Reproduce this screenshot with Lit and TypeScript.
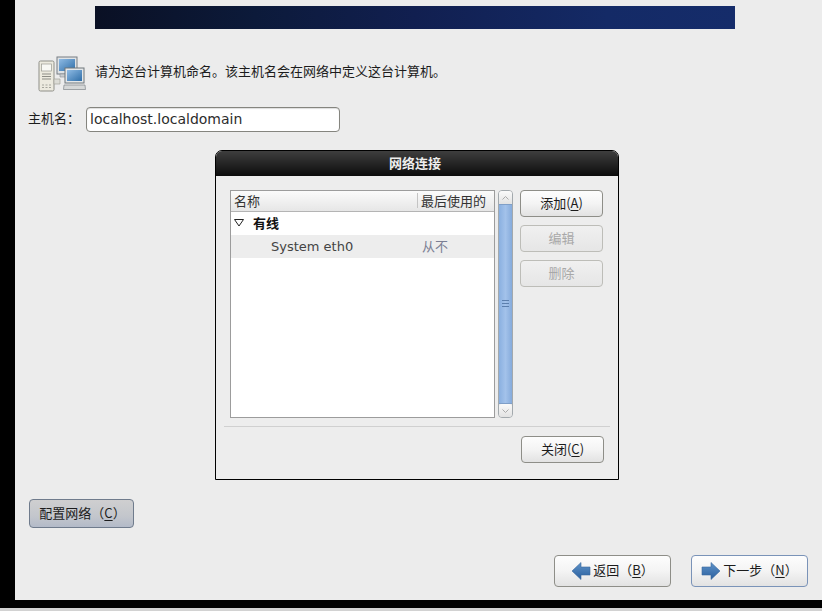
import { LitElement, html, css, svg } from "lit";
import { customElement } from "lit/decorators.js";

const arrow = (dir: "l" | "r") => html`<svg class="arrow" width="20" height="20" viewBox="0 0 20 20">
  <defs><linearGradient id="ag${dir}" x1="0" y1="0" x2="0" y2="1"><stop offset="0" stop-color="#5f93c8"/><stop offset="1" stop-color="#2a5f9e"/></linearGradient></defs>
  ${dir === "l"
    ? svg`<path d="M1 10 L10 1.5 V6 H19 V14 H10 V18.5 Z" fill="url(#agl)" stroke="#3a6a9f" stroke-width=".6"/>`
    : svg`<path d="M19 10 L10 1.5 V6 H1 V14 H10 V18.5 Z" fill="url(#agr)" stroke="#3a6a9f" stroke-width=".6"/>`}
</svg>`;

const computers = html`<svg width="48" height="36" viewBox="0 0 48 36">
  <defs><linearGradient id="scr" x1="0" y1="0" x2="1" y2="1"><stop offset="0" stop-color="#8fbbe4"/><stop offset="1" stop-color="#2f6ea8"/></linearGradient></defs>
  <rect x="1" y="5" width="15" height="30" rx="1.5" fill="#eceadf" stroke="#8f8f88"/>
  <rect x="3.5" y="8" width="10" height="7" fill="#f8f8f4" stroke="#9a9a92" stroke-width=".7"/>
  <path d="M4 18h9M4 20.5h9M4 23h9" stroke="#8d8d86"/>
  <path d="M4 29h2M7.500 29h2M11 29h2M4 31.500h2M7.500 31.500h2M11 31.500h2" stroke="#a5a59c"/>
  <path d="M16 23h6v5h-6z" fill="#dcdcd6" stroke="#a3a39c" stroke-width=".7"/>
  <rect x="19" y="1" width="20" height="17" fill="#dfe3e6" stroke="#777d82"/>
  <rect x="21" y="3" width="16" height="12" fill="url(#scr)"/>
  <path d="M22 18h14v3H22z" fill="#c9cdd0" stroke="#8a8f93" stroke-width=".6"/>
  <rect x="27" y="12" width="19" height="15" fill="#e4e7e9" stroke="#6f767b"/>
  <rect x="29" y="14" width="15" height="11" fill="url(#scr)"/>
  <path d="M26 29h21l.5 4.500h-22z" fill="#d6d8d8" stroke="#80858a" stroke-width=".7"/>
</svg>`;

@customElement("app-root")
export class AppRoot extends LitElement {
  static styles = css`
    :host { display: block; width: 822px; height: 611px; background: #000; overflow: hidden;
      font-family: "Noto Sans CJK SC", "DejaVu Sans", sans-serif; font-size: 13px; color: #1c1c1c; }
    * { box-sizing: border-box; }
    .latin { font-family: "DejaVu Sans", "Noto Sans CJK SC", sans-serif; }
    .screen { margin-left: 15px; height: 600px; background: #ececec; display: flex; flex-direction: column; }
    .banner { margin: 6px 0 0 80px; width: 640px; height: 23px; flex: none;
      background: linear-gradient(90deg, #0a1024 0%, #0c1a3a 25%, #111f50 50%, #142a66 80%, #152c6a 100%); }
    .intro { display: flex; align-items: center; gap: 9px; margin: 27px 0 0 23px; height: 36px; }
    .intro span { padding-bottom: 7px; }
    .host { display: flex; align-items: center; margin: 14px 0 0 13px; height: 26px; }
    .host label { width: 58px; padding-bottom: 3px; }
    .input { width: 254px; height: 25px; background: #fff; border: 1px solid #85857f; border-radius: 4px;
      padding-left: 3px; line-height: 22px; font-size: 14px; color: #2c2c2c; box-shadow: inset 0 1px 1px #ddd; }
    .dialog { margin: 18px 0 0 200px; width: 404px; height: 330px; flex: none; border: 1px solid #000; background: #ededed;
      border-radius: 7px 7px 0 0; overflow: hidden; display: flex; flex-direction: column; }
    .title { height: 25px; flex: none; background: linear-gradient(#3e3e3e, #0c0c0c); color: #eee; font-weight: 700;
      display: flex; align-items: center; justify-content: center; font-size: 13px; padding: 0 4px 2px 0; }
    .body { padding: 14px 15px 0 14px; display: flex; height: 228px; box-sizing: content-box; }
    .tree { width: 265px; height: 228px; background: #fff; border: 1px solid #9c9c9c; flex: none; }
    .thead { display: flex; height: 21px; background: linear-gradient(#fbfbfb, #e6e6e6); border-bottom: 1px solid #b4b4b4;
      align-items: center; line-height: 20px; color: #333; padding-bottom: 1px; }
    .thead .c1 { width: 186px; padding-left: 3px; }
    .thead .c2 { border-left: 1px solid #c4c4c4; padding-left: 3px; height: 15px; line-height: 15px; white-space: nowrap; }
    .group { display: flex; align-items: center; height: 23px; font-weight: 700; color: #111; padding: 0 0 3px 3px; gap: 9px; }
    .group svg { margin-top: 2px; }
    .row { display: flex; align-items: center; height: 23px; background: #ededed; color: #444; }
    .row .name { width: 191px; padding-left: 40px; font-size: 13px; }
    .row .used { color: #7b7f94; padding-bottom: 2px; }
    .scroll { width: 15px; height: 228px; margin-left: 3px; flex: none; border: 1px solid #a3a9ad; border-radius: 4px;
      background: #e6e6e6; display: flex; flex-direction: column; }
    .step { height: 13px; flex: none; background: linear-gradient(#fafafa, #e2e2e2); display: flex; align-items: center; justify-content: center; border-radius: 3px; }
    .thumb { flex: 1; background: linear-gradient(90deg, #8ab0e0, #a3c2ea 50%, #86abdb); border: solid #7f9fc8; border-width: 1px 0;
      display: flex; align-items: center; justify-content: center; }
    .grip { width: 7px; height: 8px; background: repeating-linear-gradient(#5c7fad 0 1px, transparent 1px 3px); }
    .side { display: flex; flex-direction: column; gap: 8px; margin-left: 7px; }
    button { font: inherit; color: #1c1c1c; padding: 0 0 2px; background: linear-gradient(#fdfdfd 0%, #f4f4f4 50%, #e2e2e2 100%);
      border: 1px solid #8e8e88; border-radius: 4px; display: flex; align-items: center; justify-content: center; }
    .side button { width: 83px; height: 27px; }
    .side button[disabled] { color: #a8a8a8; border-color: #bdbdb8; background: linear-gradient(#f0f0f0, #e6e6e6); }
    .sep { height: 1px; background: #d0d0d0; margin: 8px 8px 0 8px; flex: none; }
    .close { display: flex; justify-content: flex-end; padding: 9px 14px 0 0; }
    .close button { width: 83px; height: 27px; }
    .config { margin: 19px 0 0 14px; width: 105px; height: 29px; flex: none; border: 1px solid #6f7b8c; padding-left: 2px;
      background: linear-gradient(#cfcfd0, #c3c6cc 60%, #b3bac8); }
    .nav { display: flex; justify-content: flex-end; gap: 20px; margin: 27px 14px 0 0; }
    .nav button { width: 117px; height: 32px; gap: 2px; padding: 0; }
    .nav button span { padding-bottom: 3px; }
    .nav button.focus { border-color: #7a93b8; }
    .arrow { flex: none; }
    .foot { height: 8px; background: #000; }
    .line { height: 3px; background: #d2d2d2; }
    u { text-underline-offset: 2px; }
  `;

  render() {
    return html`
      <div class="screen">
        <div class="banner"></div>
        <div class="intro">${computers}<span>请为这台计算机命名。该主机名会在网络中定义这台计算机。</span></div>
        <div class="host"><label>主机名：</label><div class="input latin">localhost.localdomain</div></div>
        <div class="dialog">
          <div class="title">网络连接</div>
          <div class="body">
            <div class="tree">
              <div class="thead"><div class="c1">名称</div><div class="c2">最后使用的</div></div>
              <div class="group">
                <svg width="10" height="8" viewBox="0 0 10 8"><path d="M.5 .5H9.500L5 7Z" fill="#fff" stroke="#222"/></svg>
                <span>有线</span>
              </div>
              <div class="row"><div class="name latin">System eth0</div><div class="used">从不</div></div>
            </div>
            <div class="scroll">
              <div class="step"><svg width="7" height="4" viewBox="0 0 7 4"><path d="M.5 3.500L3.500 .5L6.500 3.500" fill="none" stroke="#aaa"/></svg></div>
              <div class="thumb"><div class="grip"></div></div>
              <div class="step"><svg width="7" height="4" viewBox="0 0 7 4"><path d="M.5 .5L3.500 3.500L6.500 .5" fill="none" stroke="#aaa"/></svg></div>
            </div>
            <div class="side">
              <button>添加(<u>A</u>)</button>
              <button disabled>编辑</button>
              <button disabled>删除</button>
            </div>
          </div>
          <div class="sep"></div>
          <div class="close"><button>关闭(<u>C</u>)</button></div>
        </div>
        <button class="config">配置网络（<u>C</u>）</button>
        <div class="nav">
          <button>${arrow("l")}<span>返回（<u>B</u>）</span></button>
          <button class="focus">${arrow("r")}<span>下一步（<u>N</u>）</span></button>
        </div>
      </div>
      <div class="foot"></div>
      <div class="line"></div>
    `;
  }
}
